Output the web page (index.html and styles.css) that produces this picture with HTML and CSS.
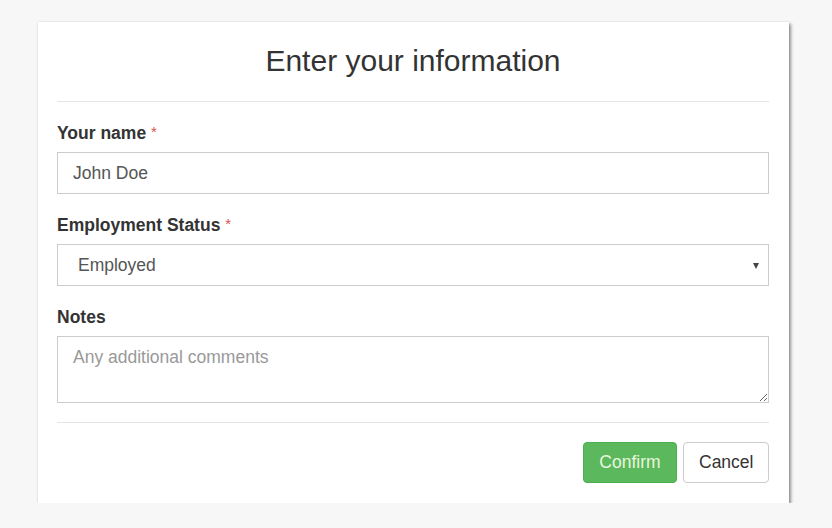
FILE: index.html
```html
<!DOCTYPE html>
<html lang="en">
<head>
<meta charset="utf-8">
<title>Enter your information</title>
<link rel="stylesheet" href="styles.css">
</head>
<body>
<div class="card">
  <div class="card-header">
    <h1 class="title">Enter your information</h1>
  </div>
  <form class="card-body">
    <div class="group">
      <label class="label" for="name">Your name <span class="req">*</span></label>
      <input class="control" id="name" type="text" value="John Doe">
    </div>
    <div class="group">
      <label class="label" for="status">Employment Status <span class="req">*</span></label>
      <div class="select-wrap">
        <select class="control select" id="status">
          <option>Employed</option>
          <option>Unemployed</option>
          <option>Self-employed</option>
        </select>
      </div>
    </div>
    <div class="group last">
      <label class="label" for="notes">Notes</label>
      <textarea class="control textarea" id="notes" placeholder="Any additional comments"></textarea>
    </div>
  </form>
  <div class="card-footer">
    <button class="btn btn-success" type="button">Confirm</button>
    <button class="btn btn-default" type="button">Cancel</button>
  </div>
</div>
</body>
</html>
```
FILE: styles.css
```css
html, body {
  margin: 0;
  background: #f7f7f7;
}
body {
  padding: 22px 0 0 38px;
  font-family: "Liberation Sans", Arial, sans-serif;
  color: #333;
}
.card {
  width: 751px;
  box-sizing: border-box;
  background: #fff;
  box-shadow: 0 0 2px rgba(0,0,0,0.12), 2px 2px 3px rgba(0,0,0,0.4);
  display: flex;
  flex-direction: column;
}
.card-header {
  margin: 0 20px 0 19px;
  padding: 19px 0 20px;
  border-bottom: 1px solid #e5e5e5;
}
.title {
  margin: 0;
  font-size: 30px;
  line-height: 40px;
  font-weight: 400;
  text-align: center;
  color: #333;
}
.card-body {
  margin: 0 20px 0 19px;
  padding: 18px 0 19px;
  border-bottom: 1px solid #e5e5e5;
  display: flex;
  flex-direction: column;
  gap: 18px;
}
.group {
  display: flex;
  flex-direction: column;
  gap: 7px;
}
.group.last {
  margin-top: 1px;
}
.label {
  font-size: 17.5px;
  line-height: 24px;
  font-weight: 700;
  color: #333;
}
.req {
  color: #d9534f;
  font-weight: 400;
  font-size: 15px;
  vertical-align: 2px;
}
.control {
  display: block;
  width: 100%;
  box-sizing: border-box;
  height: 42px;
  margin: 0;
  padding: 0 15px;
  font-family: "Liberation Sans", Arial, sans-serif;
  font-size: 17.5px;
  color: #555;
  background: #fff;
  border: 1px solid #ccc;
  border-radius: 0;
  outline: none;
}
.select-wrap {
  position: relative;
}
.select {
  -webkit-appearance: none;
  appearance: none;
  padding-left: 20px;
}
.select-wrap::after {
  content: "";
  position: absolute;
  right: 10px;
  top: 19px;
  border-left: 3.5px solid transparent;
  border-right: 3.5px solid transparent;
  border-top: 6px solid #444;
}
.textarea {
  height: 67px;
  padding: 10px 15px;
  line-height: 1.2;
  resize: vertical;
}
.textarea::placeholder {
  color: #999;
}
.card-footer {
  margin: 0 20px 0 19px;
  padding: 19px 0 20px;
  display: flex;
  justify-content: flex-end;
  gap: 6px;
}
.btn {
  height: 41px;
  box-sizing: border-box;
  padding: 0 15px;
  font-family: "Liberation Sans", Arial, sans-serif;
  font-size: 17.5px;
  border-radius: 4px;
  border: 1px solid transparent;
  cursor: pointer;
}
.btn-success {
  width: 94px;
  background: #5cb85c;
  border-color: #4cae4c;
  color: #eaf6df;
}
.btn-default {
  width: 86px;
  background: #fff;
  border-color: #ccc;
  color: #333;
}
```
